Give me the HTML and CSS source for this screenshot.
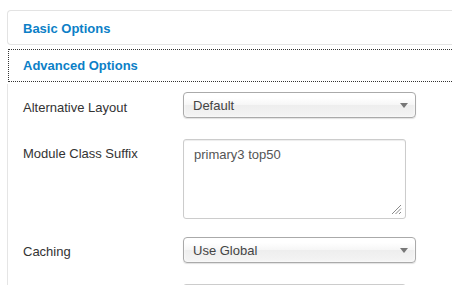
FILE: index.html
```html
<!DOCTYPE html>
<html>
<head>
<meta charset="utf-8">
<link rel="stylesheet" href="styles.css">
</head>
<body>
<div class="accordion">
  <div class="group basic">
    <div class="heading"><a class="toggle">Basic Options</a></div>
  </div>
  <div class="group advanced">
    <div class="heading focus"><a class="toggle">Advanced Options</a></div>
    <div class="panel">
      <div class="row r-select">
        <div class="label lbl-first">Alternative Layout</div>
        <div class="select"><span>Default</span><i class="caret"></i></div>
      </div>
      <div class="row r-textarea">
        <div class="label">Module Class Suffix</div>
        <div class="textarea">primary3 top50
          <svg class="grip" width="11" height="11" viewBox="0 0 11 11"><path d="M10 1L1 10M10 4.5L4.5 10M10 8L8 10" stroke="#8a8a8a" stroke-width="1" fill="none"/></svg>
        </div>
      </div>
      <div class="row r-select2">
        <div class="label">Caching</div>
        <div class="select"><span>Use Global</span><i class="caret"></i></div>
      </div>
      <div class="row">
        <div class="label"></div>
        <div class="input"></div>
      </div>
    </div>
  </div>
</div>
</body>
</html>
```
FILE: styles.css
```css
html, body {
  margin: 0;
  padding: 0;
  background: #fff;
  overflow: hidden;
  height: 285px;
}
body {
  font-family: "Liberation Sans", Arial, Helvetica, sans-serif;
  font-size: 13px;
  color: #333;
}
.accordion {
  padding: 10px 0 0 7px;
}
.group.basic {
  border: 1px solid #e3e3e3;
  border-right: none;
  border-radius: 4px 0 0 4px;
}
.heading .toggle {
  display: block;
  font-weight: bold;
  color: #0c7fc7;
  line-height: 18px;
}
.basic .heading .toggle {
  padding: 9px 15px 6px 15px;
}
.group.advanced {
  margin-top: 4px;
}
.heading.focus {
  margin-left: 1px;
  border: 1px dotted #333;
  border-right: none;
}
.heading.focus .toggle {
  padding: 7px 14px 6px 14px;
}
.panel {
  margin-top: 2px;
  border-left: 1px solid #e5e5e5;
  padding: 8px 0 0 15px;
  height: 193px;
  overflow: hidden;
}
.row {
  display: flex;
  align-items: flex-start;
}
.r-select { margin-bottom: 21px; }
.r-textarea { margin-bottom: 18px; }
.r-select2 { margin-bottom: 21px; }
.label {
  width: 160px;
  flex: none;
  line-height: 18px;
  padding-top: 6px;
}
.lbl-first { padding-top: 7px; }
.select {
  box-sizing: border-box;
  width: 233px;
  height: 26px;
  border: 1px solid #aaa;
  border-radius: 4px;
  background: linear-gradient(#ffffff 20%, #f6f6f6 50%, #eeeeee 52%, #f4f4f4 100%);
  box-shadow: inset 0 0 3px #fff, 0 1px 1px rgba(0,0,0,0.12);
  display: flex;
  align-items: center;
  padding: 1px 6px 0 9px;
  color: #444;
  line-height: 23px;
}
.select span { flex: 1; }
.caret {
  width: 0;
  height: 0;
  border-left: 4px solid transparent;
  border-right: 4px solid transparent;
  border-top: 5px solid #777;
  margin-right: 1px;
}
.textarea {
  position: relative;
  box-sizing: border-box;
  width: 223px;
  height: 80px;
  border: 1px solid #ccc;
  border-radius: 3px;
  box-shadow: inset 0 1px 1px rgba(0,0,0,0.075);
  padding: 6px 10px;
  color: #555;
  line-height: 18px;
}
.grip {
  position: absolute;
  right: 3px;
  bottom: 3px;
}
.input {
  box-sizing: border-box;
  width: 223px;
  height: 30px;
  border: 1px solid #ccc;
  border-radius: 3px;
}
```
